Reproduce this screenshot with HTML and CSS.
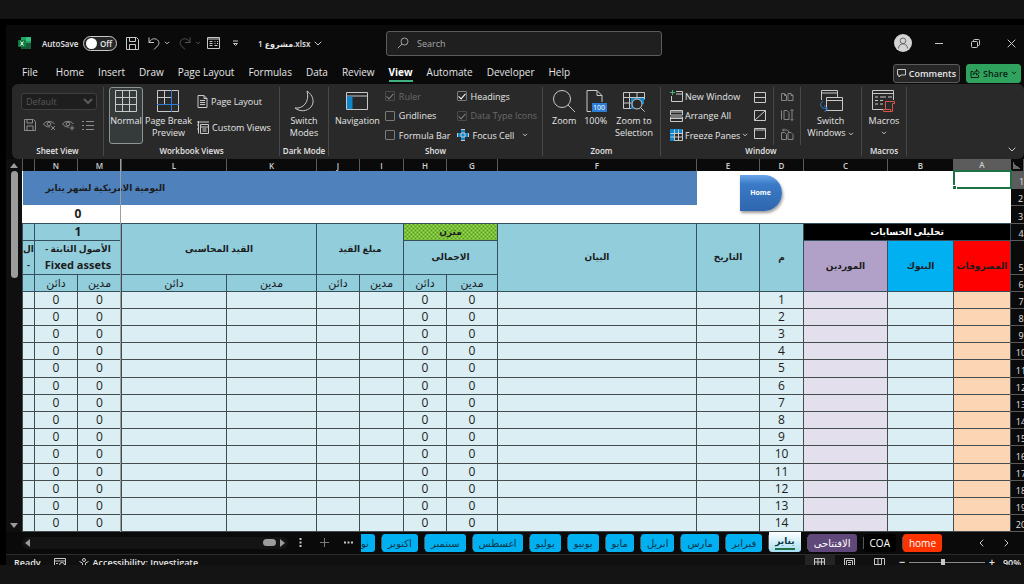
FILE: index.html
```html
<!DOCTYPE html>
<html lang="en">
<head>
    <meta charset="UTF-8">
    <meta name="viewport" content="width=device-width, initial-scale=1.0">
    <title>مشروع 1.xlsx</title>
    <link rel="stylesheet" href="styles.css">
</head>
<body>
    <div class="window">
        <header class="titlebar">
            <div class="quick">
                <svg class="logo" width="13" height="13" viewBox="0 0 13 13"><g stroke="none"><rect x="3" y="0" width="10" height="12" rx="1" fill="#21a366"/><path d="M8 0h4a1 1 0 0 1 1 1v3H8z" fill="#33c481"/><path d="M3 6h10v5a1 1 0 0 1-1 1H4a1 1 0 0 1-1-1z" fill="#185c37"/><rect x="0" y="3" width="8" height="7" rx="1" fill="#107c41"/></g><path d="M2.500 4.500l3 4M5.500 4.500l-3 4" stroke="#fff"/></svg>
                <label class="autosave" for="autosave">AutoSave</label>
                <span class="switch"><input type="checkbox" id="autosave"><span class="knob"></span><span>Off</span></span>
                <button class="icon-btn save" aria-label="Save"><svg width="13" height="13" viewBox="0 0 13 13"><path d="M.5.5h10l2 2v10H.5zM3.500.5v4h6v-4M3.500 12.500v-5h6v5" /></svg></button>
                <button class="icon-btn undo" aria-label="Undo"><svg width="12" height="13" viewBox="0 0 12 13"><path d="M1 .5v5h5M1 5.500C3 2 6 1 8.500 2.300c3 1.600 3 4.700 1 6.700L6 12.500"/></svg><svg width="6" height="4" viewBox="0 0 6 4"><path d="M1 .8l2 2 2-2"/></svg></button>
                <button class="icon-btn redo" aria-label="Redo" disabled><svg width="12" height="13" viewBox="0 0 12 13"><path d="M11 .5v5H6M11 5.500C9 2 6 1 3.500 2.300c-3 1.600-3 4.700-1 6.700L6 12.500"/></svg><svg width="6" height="4" viewBox="0 0 6 4"><path d="M1 .8l2 2 2-2"/></svg></button>
                <button class="icon-btn form" aria-label="Form"><svg width="13" height="12" viewBox="0 0 13 12"><path d="M.5.5h12v11H.5zM.5 2h12M2.500 4.500h3M2.500 6.500h3M2.500 8.500h3M7.500 4.500h1M10 4.500h1M7.500 6.500h1M10 6.500h1M7.500 8.500h3"/></svg></button>
                <button class="icon-btn more" aria-label="Customize"><svg width="7" height="7" viewBox="0 0 7 7"><path d="M1 1h5M1.500 3.500l2 2 2-2z"/></svg></button>
                <button class="icon-btn file-name"><span dir="ltr">1 مشروع.xlsx</span><svg width="8" height="5" viewBox="0 0 8 5"><path d="M.7.7L4 4 7.300.7"/></svg></button>
            </div>
            <label class="search">
                <svg width="12" height="12" viewBox="0 0 12 12"><circle cx="7.500" cy="4.500" r="3.500"/><path d="M5 7L.8 11.200"/></svg>
                <input type="text" placeholder="Search" aria-label="Search">
            </label>
            <div class="controls">
                <button class="avatar" aria-label="Account"><svg width="18" height="18" viewBox="0 0 18 18"><circle cx="9" cy="6.800" r="2.800"/><path d="M4.500 14.500c0-3 2-4.600 4.500-4.600s4.500 1.600 4.500 4.600"/></svg></button>
                <button class="icon-btn" aria-label="Minimize"><svg width="9" height="9" viewBox="0 0 9 9"><path d="M0 4.500h8"/></svg></button>
                <button class="icon-btn" aria-label="Restore"><svg width="9" height="9" viewBox="0 0 9 9"><rect x=".5" y="2.500" width="6" height="6" rx="1"/><path d="M2.500 2V1.500a1 1 0 0 1 1-1h4a1 1 0 0 1 1 1v4a1 1 0 0 1-1 1H7"/></svg></button>
                <button class="icon-btn" aria-label="Close"><svg width="9" height="9" viewBox="0 0 9 9"><path d="M.7.7l7.600 7.600M8.300.7L.7 8.300"/></svg></button>
            </div>
        </header>

        <nav class="tabs">
            <a href="#" class="file">File</a>
            <a href="#">Home</a>
            <a href="#">Insert</a>
            <a href="#">Draw</a>
            <a href="#">Page Layout</a>
            <a href="#">Formulas</a>
            <a href="#">Data</a>
            <a href="#">Review</a>
            <a href="#" class="active">View</a>
            <a href="#">Automate</a>
            <a href="#">Developer</a>
            <a href="#">Help</a>
            <button class="comments"><svg width="9" height="9" viewBox="0 0 9 9"><path d="M.5.5h8v5.500H4L2 8V6H.5z"/></svg>Comments</button>
            <button class="share"><svg width="10" height="10" viewBox="0 0 10 10"><path d="M3 3.500H1v6h7.500V7M3 7c0-2.500 1.500-3.500 3.500-3.500V1.500L9.300 4.500 6.500 7V5.200C5 5.200 4 5.700 3 7z"/></svg>Share<svg width="6" height="4" viewBox="0 0 6 4"><path d="M1 .8l2 2 2-2"/></svg></button>
        </nav>

        <section class="ribbon">
            <div class="group g-sheet">
                <div class="sheet-view">
                    <select aria-label="Sheet view" disabled><option>Default</option></select>
                    <div class="sheet-icons">
                        <svg width="12" height="12" viewBox="0 0 12 12"><path d="M.5.5h9l2 2v9H.5zM3 .5v3.500h5.500V.5M3 11.500v-4.500h6v4.500"/></svg>
                        <svg width="13" height="12" viewBox="0 0 13 12"><path d="M.5 5C3 1.500 9 1.500 11.500 5M.5 5C2.500 8 5 8 7 8"/><circle cx="6" cy="5" r="1.800"/><path d="M8 7l4 4M12 7l-4 4"/></svg>
                        <svg width="13" height="12" viewBox="0 0 13 12"><path d="M.5 5C3 1.500 9 1.500 11.500 5M.5 5C2.500 8 5 8 7 8"/><circle cx="6" cy="5" r="1.800"/><path d="M10 6.500v5M7.500 9h5"/></svg>
                        <svg width="12" height="12" viewBox="0 0 12 12"><path d="M4 2.500h8M4 6.500h8M4 10.500h8M0 2.500h2M0 6.500h2M0 10.500h2"/></svg>
                    </div>
                </div>
                <h2>Sheet View</h2>
            </div>

            <div class="group g-views">
                <div class="items">
                    <button class="big pressed"><svg width="22" height="22" viewBox="0 0 22 22"><path d="M.5.5h21v21H.5zM7.500.5v21M14.500.5v21M.5 7.500h21M.5 14.500h21"/></svg>Normal</button>
                    <button class="big"><svg width="22" height="22" viewBox="0 0 22 22"><path d="M.5.5h21v21H.5zM7.500.5v14M.5 7.500h14"/><path class="blue" d="M14.500 0v22M0 14.500h22"/></svg>Page Break<br>Preview</button>
                    <div class="rows two">
                        <button class="small"><svg width="11" height="13" viewBox="0 0 11 13"><path d="M1 .5h6l3 3v9H1zM7 .5v3h3M3 5.500h5M3 7.500h5M3 9.500h5"/></svg>Page Layout</button>
                        <button class="small"><svg width="12" height="13" viewBox="0 0 12 13"><path d="M0 1h12M1.500 0v12.500M3.500 3.500h8v9h-8zM3.500 6h8M5.500 8h4M5.500 10h4M0 4h2M0 8h2"/></svg>Custom Views</button>
                    </div>
                </div>
                <h2>Workbook Views</h2>
            </div>

            <div class="group g-dark">
                <div class="items">
                    <button class="big"><svg width="22" height="22" viewBox="0 0 22 22"><path d="M14 1c6 4 8 11 4 16-4 4.500-11 5-16 1 8 1 15-6 12-17z"/></svg>Switch<br>Modes</button>
                </div>
                <h2>Dark Mode</h2>
            </div>

            <div class="group g-show">
                <div class="items">
                    <button class="big"><svg width="22" height="22" viewBox="0 0 22 22"><path d="M.5 2.500h21v17H.5zM.5 6h21"/><path class="fill-blue" d="M1 6.500h5.500V19H1z"/></svg>Navigation</button>
                    <div class="rows">
                        <label class="check off"><input type="checkbox" checked disabled>Ruler</label>
                        <label class="check"><input type="checkbox">Gridlines</label>
                        <label class="check"><input type="checkbox">Formula Bar</label>
                    </div>
                    <div class="rows">
                        <label class="check"><input type="checkbox" checked>Headings</label>
                        <label class="check off"><input type="checkbox" checked disabled>Data Type Icons</label>
                        <button class="small focus"><svg width="12" height="12" viewBox="0 0 12 12"><path class="fill-blue" d="M4 1h4v3h3v4H8v3H4V8H1V4h3z"/><path d="M4 .5h4M4 11.500h4M.5 4v4M11.500 4v4M4 4h4v4H4z"/></svg>Focus Cell<svg width="6" height="4" viewBox="0 0 6 4"><path d="M1 .8l2 2 2-2"/></svg></button>
                    </div>
                </div>
                <h2>Show</h2>
            </div>

            <div class="group g-zoom">
                <div class="items">
                    <button class="big"><svg width="22" height="22" viewBox="0 0 22 22"><circle cx="9" cy="9" r="8.500"/><path d="M15 15l7 7"/></svg>Zoom</button>
                    <button class="big"><svg width="22" height="22" viewBox="0 0 22 22"><path d="M6 21.500H2V.5h10l5 5V12M12 .5v5h5"/><rect x="7" y="13" width="15" height="9" fill="#2b7cd3" stroke="none"/><text x="8" y="20" class="hundred">100</text></svg>100%</button>
                    <button class="big"><svg width="22" height="22" viewBox="0 0 22 22"><path d="M8 18.500H.5v-16h21v7M.5 7.500h21M.5 13h9M6.500 2.500v16M14 2.500v5"/><path class="fill-blue" d="M8 8h13v6h-4v5H8z"/><circle class="lens" cx="14" cy="14" r="5"/><path d="M17.700 17.700l4 4"/></svg>Zoom to<br>Selection</button>
                </div>
                <h2>Zoom</h2>
            </div>

            <div class="group g-window">
                <div class="items">
                    <div class="rows">
                        <button class="small"><svg width="13" height="12" viewBox="0 0 13 12"><path d="M6 1.500h6.500v10H1.500V6M6 4h6"/><path d="M2.500 0v5M0 2.500h5" stroke="#3fb871"/></svg>New Window</button>
                        <button class="small"><svg width="13" height="12" viewBox="0 0 13 12"><path d="M.5.5h12v4.500H.5zM.5 7h12v4.500H.5zM.5 2h12M.5 8.500h12"/></svg>Arrange All</button>
                        <button class="small"><svg width="13" height="12" viewBox="0 0 13 12"><path class="fill-blue" d="M0 0h12v4H5v8H0z"/><path d="M4.500.5v11h8V.5M8.500.5v11M.5 4.500h12M.5 8h12"/></svg>Freeze Panes<svg width="6" height="4" viewBox="0 0 6 4"><path d="M1 .8l2 2 2-2"/></svg></button>
                    </div>
                    <div class="rows icons">
                        <button class="icon-btn" aria-label="Split"><svg width="12" height="11" viewBox="0 0 12 11"><path d="M.5.5h11v10H.5zM.5 5.500h11"/></svg></button>
                        <button class="icon-btn" aria-label="Hide"><svg width="12" height="11" viewBox="0 0 12 11"><path d="M.5.5h11v10H.5zM.5 10.500l11-10"/></svg></button>
                        <button class="icon-btn" aria-label="Unhide"><svg width="12" height="11" viewBox="0 0 12 11"><path d="M.5.5h11v10H.5zM.5 2h11"/></svg></button>
                    </div>
                    <div class="rows icons lined dim">
                        <button class="icon-btn" aria-label="View side by side"><svg width="13" height="12" viewBox="0 0 13 12"><path d="M.5 2.500h3l2 2v5h-5zM7 2.500h3l2 2v5H7zM3.500 2.500v2h2M10 2.500v2h2"/></svg></button>
                        <button class="icon-btn" aria-label="Synchronous scrolling"><svg width="13" height="12" viewBox="0 0 13 12"><path d="M.5 1.500v9M3 1.500h3l2 2v7H3zM11 .5v11M9.500 2L11 .5 12.500 2M9.500 10l1.500 1.500 1.500-1.500"/></svg></button>
                        <button class="icon-btn" aria-label="Reset position"><svg width="13" height="12" viewBox="0 0 13 12"><path d="M.5 4.500h3l2 2v5h-5zM7 4.500h3l2 2v5H7zM1.500 2h5l1.500 2M3 .5L1.500 2 3 3.500"/></svg></button>
                    </div>
                    <button class="big lined"><svg width="24" height="22" viewBox="0 0 24 22"><path d="M2.500 10V.5h16V7M2.500 3h16M7.500 7.500h16v13h-16zM7.500 10.500h16"/><path class="blue" d="M4 11c-4 3-3 8 4 7.500M5 15.500l3.500 3L5.500 22"/></svg>Switch<br><span>Windows <svg width="6" height="4" viewBox="0 0 6 4"><path d="M1 .8l2 2 2-2"/></svg></span></button>
                </div>
                <h2>Window</h2>
            </div>

            <div class="group g-macros">
                <div class="items">
                    <button class="big"><svg width="23" height="22" viewBox="0 0 23 22"><path d="M11 19.500H.5V.5h21V10M.5 3.500h21M3 7h3M8 7h6M16 7h4M3 10.500h3M8 10.500h3M3 14h3M8 14h3"/><path d="M13.500 11.500h9v2h-2v8h-9v-2h2zM13.500 11.500v8h5v2" stroke="#d9534a"/></svg>Macros<svg width="6" height="12" viewBox="0 -4 6 12"><path d="M1 .8l2 2 2-2"/></svg></button>
                </div>
                <h2>Macros</h2>
            </div>
            <button class="icon-btn collapse" aria-label="Collapse ribbon"><svg width="8" height="5" viewBox="0 0 8 5"><path d="M.7.7L4 4 7.300.7"/></svg></button>
        </section>

        <main class="work">
            <div class="vscroll">
                <span class="arrow up"></span>
                <span class="thumb"></span>
                <span class="arrow down"></span>
            </div>
            <div class="sheet">
                <table dir="rtl">
                    <colgroup>
                        <col class="c-head"><col class="c-a"><col class="c-b"><col class="c-c"><col class="c-d"><col class="c-e"><col class="c-f"><col class="c-g"><col class="c-h"><col class="c-i"><col class="c-j"><col class="c-k"><col class="c-l"><col class="c-m"><col class="c-n"><col class="c-o">
                    </colgroup>
                    <thead>
                        <tr class="letters">
                            <th class="corner"></th><th class="current">A</th><th>B</th><th>C</th><th>D</th><th>E</th><th>F</th><th>G</th><th>H</th><th>I</th><th>J</th><th>K</th><th>L</th><th>M</th><th>N</th><th></th>
                        </tr>
                    </thead>
                    <tbody class="top">
                        <tr>
                            <th class="num current"><span>1</span></th>
                            <td class="cursor"><span class="handle"></span></td>
                            <td colspan="3"></td>
                            <td rowspan="3" class="home-cell"><button class="home">Home</button></td>
                            <td colspan="10" rowspan="2" class="title">اليومية الامريكية لشهر يناير</td>
                        </tr>
                        <tr>
                            <th class="num"><span>2</span></th>
                            <td colspan="4"></td>
                        </tr>
                        <tr class="tall">
                            <th class="num"><span>3</span></th>
                            <td colspan="4"></td>
                            <td colspan="7"></td>
                            <td colspan="2" class="count">0</td>
                            <td></td>
                        </tr>
                    </tbody>
                    <tbody class="heads">
                        <tr>
                            <th class="num"><span>4</span></th>
                            <td colspan="3" class="analysis">تحليلى الحسابات</td>
                            <td rowspan="3">م</td>
                            <td rowspan="3">التاريخ</td>
                            <td rowspan="3">البيان</td>
                            <td colspan="2" class="balanced">متزن</td>
                            <td colspan="2" rowspan="2">مبلغ القيد</td>
                            <td colspan="2" rowspan="2">القيد المحاسبى</td>
                            <td colspan="2" class="count">1</td>
                            <td></td>
                        </tr>
                        <tr class="double">
                            <th class="num"><span>5</span></th>
                            <td rowspan="2" class="expenses">المصروفات</td>
                            <td rowspan="2" class="banks">البنوك</td>
                            <td rowspan="2" class="suppliers">الموردين</td>
                            <td colspan="2">الاجمالى</td>
                            <td colspan="2" class="account">الأصول الثابتة -<br><span>Fixed assets</span></td>
                            <td class="account">ال<br>-</td>
                        </tr>
                        <tr class="sub">
                            <th class="num"><span>6</span></th>
                            <td>مدين</td><td>دائن</td><td>مدين</td><td>دائن</td><td>مدين</td><td>دائن</td><td>مدين</td><td>دائن</td><td></td>
                        </tr>
                    </tbody>
                    <tbody class="days" id="days"></tbody>
                </table>
                <span class="freeze"></span>
            </div>
        </main>

        <div class="sheetbar">
            <div class="hscroll"><span class="arrow left"></span><span class="thumb"></span><span class="arrow right"></span></div>
            <button class="icon-btn" aria-label="Resize"><svg width="3" height="9" viewBox="0 0 3 9"><path d="M1.500 0v2M1.500 3.500v2M1.500 7v2" stroke-width="2"/></svg></button>
            <button class="icon-btn plus" aria-label="New sheet"><svg width="9" height="9" viewBox="0 0 9 9"><path d="M4.500 0v9M0 4.500h9"/></svg></button>
            <button class="icon-btn" aria-label="All sheets"><svg width="9" height="3" viewBox="0 0 9 3"><path d="M0 1.500h2M3.500 1.500h2M7 1.500h2" stroke-width="2"/></svg></button>
            <div class="sheets" dir="rtl">
                <button class="red">home</button>
                <button class="dark">COA</button>
                <button class="purple">الافتتاحى</button>
                <button class="selected"><span>يناير</span></button>
                <button>فبراير</button>
                <button>مارس</button>
                <button>ابريل</button>
                <button>مايو</button>
                <button>يونيو</button>
                <button>يوليو</button>
                <button>اغسطس</button>
                <button>سبتمبر</button>
                <button>اكتوبر</button>
                <button>نو</button>
            </div>
            <div class="sheet-nav">
                <button class="icon-btn" aria-label="Previous"><svg width="5" height="8" viewBox="0 0 5 8"><path d="M4.300.7L1 4l3.300 3.300"/></svg></button>
                <button class="icon-btn" aria-label="Next"><svg width="5" height="8" viewBox="0 0 5 8"><path d="M.7.7L4 4 .7 7.300"/></svg></button>
            </div>
        </div>

        <footer class="status">
            <span>Ready</span>
            <svg width="12" height="12" viewBox="0 0 12 12"><path d="M.5.5h11v11H.5zM.5 3h11M2 5.500h2M2 8h2"/><circle cx="8" cy="7" r="2.500"/></svg>
            <span class="access"><svg width="12" height="12" viewBox="0 0 12 12"><circle cx="5" cy="2" r="1.500"/><path d="M.5 3.500l3 1.500v3L2 11.500M9.500 3.500l-3 1.500v2M8 8l3 3M11 8l-3 3"/></svg>Accessibility: Investigate</span>
            <div class="zoombar">
                <button class="icon-btn on" aria-label="Normal view"><svg width="11" height="11" viewBox="0 0 11 11"><path d="M.5.5h10v10H.5zM4 .5v10M7.500.5v10M.5 4h10M.5 7.500h10"/></svg></button>
                <button class="icon-btn" aria-label="Page layout view"><svg width="11" height="11" viewBox="0 0 11 11"><path d="M.5.5h10v10H.5zM2.500 2.500h6v8M2.500 2.500v8M4 4.500h3M4 6.500h3"/></svg></button>
                <button class="icon-btn" aria-label="Page break view"><svg width="11" height="11" viewBox="0 0 11 11"><path d="M.5.5h10v10H.5zM4 .5v6M7.500.5v6M.5 6.500h7"/></svg></button>
                <span class="sign">−</span>
                <input type="range" min="10" max="210" value="100" aria-label="Zoom">
                <span class="sign">+</span>
                <span>90%</span>
            </div>
        </footer>
    </div>

    <script>
        // Journal lines 1-14 sit on sheet rows 7-20
        const days = document.getElementById('days');
        const zeroColumns = ['G', 'H', 'M', 'N'];

        for (let line = 1; line <= 14; line++) {
            const row = document.createElement('tr');
            let cells = '<th class="num"><span>' + (line + 6) + '</span></th>';

            'ABCDEFGHIJKLMNO'.split('').forEach(letter => {
                let value = '';
                if (letter === 'D') value = line;
                if (zeroColumns.includes(letter)) value = 0;
                cells += '<td class="col-' + letter.toLowerCase() + '">' + value + '</td>';
            });

            row.innerHTML = cells;
            days.appendChild(row);
        }
    </script>
</body>
</html>
```
FILE: styles.css
```css
* {
    box-sizing: border-box;
}
body {
    margin: 0;
    min-height: 100vh;
    padding-top: 19px;
    background-color: #141414;
    color: #e6e6e6;
    font-family: "Open Sans", "DejaVu Sans", sans-serif;
    font-size: 9px;
    font-weight: 500;
    overflow-x: hidden;
}
.window {
    background-color: #0a0a0a;
    border-top: 6px solid #000;
    border-left: 6px solid #000;
}
button, input, select {
    font: inherit;
    color: inherit;
}
button {
    display: flex;
    align-items: center;
    padding: 0;
    border: none;
    background: none;
    white-space: nowrap;
}
svg {
    flex: none;
    fill: none;
    stroke: #c8c8c8;
    stroke-width: 1;
}
.blue {
    stroke: #2b7cd3;
}
.fill-blue {
    fill: #0f86c9;
    stroke: none;
}

/* title bar */
.titlebar {
    display: grid;
    grid-template-columns: 380px minmax(100px, 276px) 1fr;
    align-items: center;
    height: 37px;
    padding-bottom: 1px;
}
.quick {
    display: flex;
    align-items: center;
    padding-left: 12px;
    font-size: 8px;
    font-weight: 600;
}
.autosave {
    width: 41px;
    margin-left: 11px;
}
.switch {
    display: flex;
    align-items: center;
    position: relative;
    width: 34px;
    height: 15px;
    padding-left: 16px;
    border: 1px solid #c8c8c8;
    border-radius: 8px;
    background-color: #262626;
}
.switch input {
    position: absolute;
    inset: 0;
    margin: 0;
    opacity: 0;
}
.knob {
    position: absolute;
    left: 2px;
    width: 11px;
    height: 11px;
    border-radius: 50%;
    background-color: #fff;
}
.save {
    margin-left: 9px;
}
.undo, .redo {
    gap: 4px;
    margin-left: 9px;
}
.redo svg {
    stroke: #555;
}
.form {
    margin-left: 6px;
}
.more {
    margin-left: 12px;
}
.file-name {
    gap: 4px;
    margin-left: 19px;
}
.search {
    display: flex;
    align-items: center;
    gap: 8px;
    height: 25px;
    padding: 0 10px;
    border: 1px solid #5c5c5c;
    border-radius: 3px;
    background-color: #1f1f1f;
}
.search svg {
    stroke: #a0a0a0;
}
.search input {
    flex: 1;
    min-width: 0;
    padding: 0;
    border: none;
    background: none;
}
.search input::placeholder {
    color: #a8a8a8;
}
.controls {
    display: flex;
    justify-content: flex-end;
    align-items: center;
    gap: 27px;
    padding-right: 8px;
}
.avatar {
    width: 18px;
    height: 18px;
    margin-right: -4px;
    border-radius: 50%;
    background-color: #d4d4d4;
}
.avatar svg {
    stroke: #666;
}

/* ribbon tabs */
.tabs {
    display: flex;
    align-items: center;
    gap: 14px;
    height: 22px;
    padding: 0 3px 0 16px;
    font-size: 10px;
}
.tabs a {
    line-height: 16px;
    border-bottom: 2px solid transparent;
    color: inherit;
    text-decoration: none;
}
.tabs .file {
    margin-right: 4px;
}
.tabs a.active {
    border-color: #3fb27f;
    color: #fff;
    font-weight: 700;
}
.comments, .share {
    gap: 3px;
    height: 19px;
    padding: 0 3px;
    border: 1px solid #5c5c5c;
    border-radius: 3px;
    background-color: #262626;
    font-size: 9px;
    font-weight: 600;
}
.comments {
    margin-left: auto;
}
.share {
    margin-left: -8px;
    border-color: #2fa35e;
    background-color: #2fa35e;
    color: #0a1f12;
}
.share svg {
    stroke: #0a1f12;
}

/* ribbon */
.ribbon {
    display: flex;
    margin-left: 6px;
    padding: 3px 0;
    border-radius: 6px;
    background-color: #292929;
}
.group {
    display: flex;
    flex-direction: column;
    flex: none;
    border-right: 1px solid #484848;
}
.group h2 {
    margin: 0;
    font-size: 8px;
    font-weight: 600;
    line-height: 11px;
    text-align: center;
}
.items, .sheet-view {
    display: flex;
    height: 58px;
}
.g-sheet {
    width: 92px;
}
.g-views {
    width: 176px;
}
.g-dark {
    width: 49px;
}
.g-show {
    width: 214px;
}
.g-zoom {
    width: 118px;
}
.g-window {
    width: 201px;
}
.g-macros {
    width: 45px;
}
.sheet-view {
    flex-direction: column;
    padding: 6px 6px 0 9px;
}
.sheet-view select {
    width: 100%;
    height: 17px;
    border: 1px solid #484848;
    border-radius: 3px;
    background-color: #1a1a1a;
    color: #6e6e6e;
}
.sheet-icons {
    display: flex;
    justify-content: space-between;
    padding: 9px 3px 0;
}
.sheet-icons svg {
    stroke: #8c8c8c;
}
.g-views .items {
    gap: 2px;
    padding-left: 5px;
}
.big {
    flex-direction: column;
    padding-top: 3px;
    line-height: 12px;
    text-align: center;
}
.big > svg:first-child {
    margin-bottom: 3px;
}
.pressed {
    width: 34px;
    height: 57px;
    border: 1px solid #8c9494;
    border-radius: 3px;
    background-color: #353b3b;
    padding-top: 2px;
}
.rows {
    display: flex;
    flex-direction: column;
    justify-content: space-between;
    padding: 1px 0 2px;
}
.rows.two {
    justify-content: space-around;
    padding: 1px 0 5px 3px;
}
.small, .check {
    display: flex;
    align-items: center;
    gap: 4px;
    height: 16px;
    white-space: nowrap;
}
.rows.two .small {
    gap: 3px;
}
.g-window .small {
    gap: 2px;
}
.g-dark .items, .g-macros .items {
    justify-content: center;
}
.g-show .items {
    gap: 5px;
    padding-left: 6px;
}
.g-show .rows + .rows {
    margin-left: 1px;
}
.check.off {
    color: #6a6a6a;
}
.check input {
    display: flex;
    justify-content: center;
    appearance: none;
    width: 10px;
    height: 10px;
    margin: 0;
    border: 1px solid #7a7a7a;
    border-radius: 1px;
}
.check input:checked::before {
    content: "";
    width: 3px;
    height: 6px;
    border-right: 1px solid #fff;
    border-bottom: 1px solid #fff;
    transform: rotate(42deg);
}
.check.off input {
    opacity: 0.4;
}
.focus svg:last-child {
    margin-left: 4px;
}
.g-zoom .items {
    justify-content: space-between;
    padding: 0 7px 0 9px;
}
.hundred {
    fill: #fff;
    stroke: none;
    font-size: 7px;
}
.lens {
    fill: #292929;
}
.g-window .items {
    padding-left: 9px;
}
.rows.icons {
    justify-content: space-around;
    margin-left: 6px;
}
.rows.icons.lined {
    margin: 0 0 0 7px;
    padding: 1px 6px 2px 7px;
    border-left: 1px solid #484848;
    border-right: 1px solid #484848;
}
.dim svg {
    stroke: #858585;
}
.big.lined {
    margin-left: 6px;
}
.collapse {
    align-self: flex-end;
    margin: 0 8px 4px auto;
}

/* worksheet */
.work {
    display: flex;
}
.vscroll {
    display: flex;
    flex-direction: column;
    align-items: center;
    width: 16px;
    padding: 4px 0;
    background-color: #0f0f0f;
}
.thumb {
    width: 7px;
    height: 107px;
    border-radius: 4px;
    background-color: #9c9c9c;
}
.arrow {
    border: 4px solid transparent;
}
.arrow.up {
    margin-bottom: 3px;
    border-top: none;
    border-bottom: 5px solid #9c9c9c;
}
.arrow.down {
    margin-top: auto;
    border-bottom: none;
    border-top: 5px solid #9c9c9c;
}
.arrow.left {
    border-left: none;
    border-right: 5px solid #9c9c9c;
}
.arrow.right {
    border-right: none;
    border-left: 5px solid #9c9c9c;
}
.sheet {
    position: relative;
    flex: 1;
    min-width: 0;
    overflow: hidden;
}
.freeze {
    position: absolute;
    top: 0;
    bottom: 0;
    left: 98px;
    border-left: 1px solid #9aa0a0;
}
table {
    width: 100%;
    table-layout: fixed;
    border-collapse: collapse;
    background-color: #fff;
    color: #1c1c1c;
}
.c-head { width: 13px; }
.c-a { width: 57px; }
.c-b { width: 66px; }
.c-c { width: 84px; }
.c-d { width: 44px; }
.c-e { width: 63px; }
.c-g { width: 51px; }
.c-h { width: 43px; }
.c-i { width: 44px; }
.c-j { width: 43px; }
.c-k { width: 90px; }
.c-l { width: 105px; }
.c-m { width: 44px; }
.c-n { width: 43px; }
.c-o { width: 12px; }
tr {
    height: 17px;
}
td, th {
    padding: 0;
    line-height: 14px;
    text-align: center;
    overflow: hidden;
    white-space: nowrap;
}
.letters {
    height: 12px;
}
.letters th {
    border-left: 1px solid #5a5a5a;
    border-right: 1px solid #5a5a5a;
    background-color: #0a0a0a;
    color: #d0d0d0;
    font-size: 8px;
    font-weight: 600;
    line-height: 11px;
}
.letters .current, .num.current {
    background-color: #5c5c5c;
}
.letters .corner {
    background: linear-gradient(45deg, #6a6a6a 50%, #0a0a0a 50%) 2px 3px / 7px 7px no-repeat #0a0a0a;
}
.num {
    direction: ltr;
    border-top: 1px solid #5a5a5a;
    border-bottom: 1px solid #5a5a5a;
    background-color: #0a0a0a;
    color: #e0e0e0;
    font-size: 9px;
    font-weight: 500;
    line-height: 12px;
    vertical-align: bottom;
}
.num span {
    display: block;
    width: 20px;
}
.tall, .days tr:nth-child(5n) {
    height: 18px;
}
.title {
    padding-left: 23px;
    background-color: #4f81bd;
    font-size: 9px;
    font-weight: 700;
    text-align: left;
}
.cursor {
    position: relative;
    border: 2px solid #1e7145;
    overflow: visible;
}
.handle {
    position: absolute;
    left: -3px;
    bottom: -3px;
    width: 5px;
    height: 5px;
    border: 1px solid #fff;
    background-color: #1e7145;
}
.home {
    justify-content: center;
    width: 42px;
    height: 36px;
    margin: -8px -22px 0 0;
    border-radius: 0 21px 21px 0;
    background: linear-gradient(#6aa5e8, #3b7bc8 25%, #2f66ad);
    box-shadow: 1px 2px 3px rgba(0, 0, 0, 0.4);
    color: #fff;
    font-size: 7px;
    font-weight: 700;
}
.home-cell {
    overflow: visible;
}
.heads .double {
    height: 34px;
}
.heads td {
    border: 1px solid #35505c;
    background-color: #92cddc;
    font-size: 9px;
    font-weight: 700;
}
.top .count, .heads .count {
    font-size: 12px;
    font-weight: 700;
}
.heads .account {
    line-height: 16px;
}
.account span {
    font-size: 11px;
}
.heads .analysis {
    background-color: #000;
    color: #fff;
}
.heads .expenses {
    background-color: #f00;
}
.heads .banks {
    background-color: #00b0f0;
}
.heads .suppliers {
    background-color: #b1a0c7;
}
.heads .balanced {
    background: repeating-conic-gradient(#9be052 0% 25%, #5a9a24 0% 50%) 0 0 / 4px 4px;
}
.heads .sub td {
    font-size: 11px;
    font-weight: 400;
}
.days td {
    border: 1px solid #454c4e;
    background-color: #daeef3;
    font-size: 12px;
    font-weight: 500;
}
.days .col-a {
    background-color: #fcd5b4;
}
.days .col-c {
    background-color: #e4dfec;
}

/* sheet tabs */
.sheetbar {
    display: flex;
    align-items: center;
    height: 22px;
}
.hscroll {
    display: flex;
    align-items: center;
    width: 266px;
    height: 12px;
    margin: 0 11px 0 16px;
    padding: 0 3px;
    border-radius: 6px;
    background-color: #141414;
}
.hscroll .thumb {
    width: 13px;
    height: 7px;
    margin: 0 4px 0 auto;
}
.plus {
    margin: 0 15px 0 18px;
}
.plus svg {
    stroke: #777;
}
.sheets {
    display: flex;
    flex: 1;
    gap: 7px;
    min-width: 0;
    margin-left: 8px;
    overflow: hidden;
    height: 22px;
    padding-top: 2px;
    font-size: 10px;
}
.sheets button {
    flex: none;
    justify-content: center;
    height: 18px;
    padding: 0 6px;
    border-radius: 3px;
    background-color: #00b0f0;
    color: #0c3547;
    box-shadow: -4px 0 0 -3px #555;
}
.sheets .red {
    background-color: #ff3300;
    color: #fff;
}
.sheets .dark {
    background-color: #000;
    color: #fff;
}
.sheets .purple {
    background-color: #60497a;
    color: #fff;
}
.sheets .selected {
    height: 20px;
    margin-top: -2px;
    border-radius: 0 0 3px 3px;
    background: linear-gradient(#fff, #a5def3);
    font-size: 9px;
    font-weight: 700;
}
.selected span {
    border-bottom: 2px solid #1e7145;
    line-height: 15px;
}
.sheet-nav {
    display: flex;
    gap: 20px;
    width: 82px;
    padding-left: 37px;
}

/* status bar */
.status {
    display: flex;
    align-items: flex-start;
    gap: 13px;
    height: 11px;
    padding-left: 8px;
    border-top: 1px solid #2c2c2c;
    background-color: #101010;
    font-weight: 600;
    line-height: 16px;
    overflow: hidden;
}
.status > svg, .access svg {
    margin-top: 3px;
}
.access {
    display: flex;
    gap: 2px;
}
.zoombar {
    display: flex;
    align-items: flex-start;
    margin-left: auto;
    padding-right: 3px;
}
.zoombar .icon-btn {
    justify-content: center;
    width: 30px;
    padding-top: 3px;
}
.zoombar .on {
    background-color: #242424;
}
.zoombar .sign {
    width: 14px;
    font-size: 11px;
    line-height: 14px;
    text-align: center;
}
.zoombar input {
    appearance: none;
    width: 76px;
    height: 1px;
    margin: 7px 0 0;
    background-color: #8a8a8a;
}
.zoombar input::-webkit-slider-thumb {
    appearance: none;
    width: 4px;
    height: 7px;
    background-color: #c8c8c8;
}
.zoombar span:last-child {
    padding-left: 4px;
}
```
